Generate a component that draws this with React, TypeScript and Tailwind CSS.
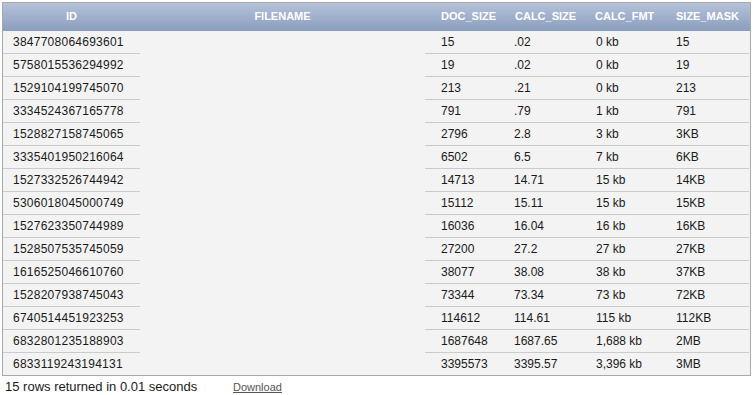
import React from "react";

const rows: [string, string, string, string, string][] = [
  ["3847708064693601", "15", ".02", "0 kb", "15"],
  ["5758015536294992", "19", ".02", "0 kb", "19"],
  ["1529104199745070", "213", ".21", "0 kb", "213"],
  ["3334524367165778", "791", ".79", "1 kb", "791"],
  ["1528827158745065", "2796", "2.8", "3 kb", "3KB"],
  ["3335401950216064", "6502", "6.5", "7 kb", "6KB"],
  ["1527332526744942", "14713", "14.71", "15 kb", "14KB"],
  ["5306018045000749", "15112", "15.11", "15 kb", "15KB"],
  ["1527623350744989", "16036", "16.04", "16 kb", "16KB"],
  ["1528507535745059", "27200", "27.2", "27 kb", "27KB"],
  ["1616525046610760", "38077", "38.08", "38 kb", "37KB"],
  ["1528207938745043", "73344", "73.34", "73 kb", "72KB"],
  ["6740514451923253", "114612", "114.61", "115 kb", "112KB"],
  ["6832801235188903", "1687648", "1687.65", "1,688 kb", "2MB"],
  ["6833119243194131", "3395573", "3395.57", "3,396 kb", "3MB"],
];

export default function App() {
  return (
    <div className="w-[753px] h-[395px] bg-white overflow-hidden pt-[2px] pl-[2px]" style={{ fontFamily: '"Liberation Sans", Arial, sans-serif' }}>
      <div className="w-[749px] border border-[#a9a9a9] bg-[#f3f3f3]">
        <div className="grid grid-cols-[137px_285px_79px_82px_80px_83px] h-[28px] pb-[2px] bg-gradient-to-b from-[#b5c2da] to-[#8b9dbd] text-white font-bold text-[11px] items-center">
          <div className="text-center">ID</div>
          <div className="text-center">FILENAME</div>
          <div className="pl-[16px]">DOC_SIZE</div>
          <div className="pl-[11px]">CALC_SIZE</div>
          <div className="pl-[9px]">CALC_FMT</div>
          <div className="pl-[10px]">SIZE_MASK</div>
        </div>
        {rows.map((r, i) => {
          const last = i === rows.length - 1;
          const b = last ? "" : "border-b border-[#cbcbcb]";
          const h = last ? "h-[22px]" : "h-[23px]";
          return (
            <div key={i} className="grid grid-cols-[137px_285px_79px_82px_80px_83px] text-[12px] text-[#1a1a1a]">
              <div className={`${h} ${b} pl-[10px] flex items-center tracking-[0.25px]`}>{r[0]}</div>
              <div className={h}></div>
              <div className={`${h} ${b} pl-[16px] flex items-center`}>{r[1]}</div>
              <div className={`${h} ${b} pl-[10px] flex items-center`}>{r[2]}</div>
              <div className={`${h} ${b} pl-[10px] flex items-center`}>{r[3]}</div>
              <div className={`${h} ${b} pl-[10px] flex items-center`}>{r[4]}</div>
            </div>
          );
        })}
      </div>
      <div className="flex items-baseline pl-[3px] pt-[2px] leading-[18px]">
        <span className="w-[228px] text-[13px] text-[#1a1a1a]">15 rows returned in 0.01 seconds</span>
        <span className="text-[11px] text-[#555] underline">Download</span>
      </div>
    </div>
  );
}
